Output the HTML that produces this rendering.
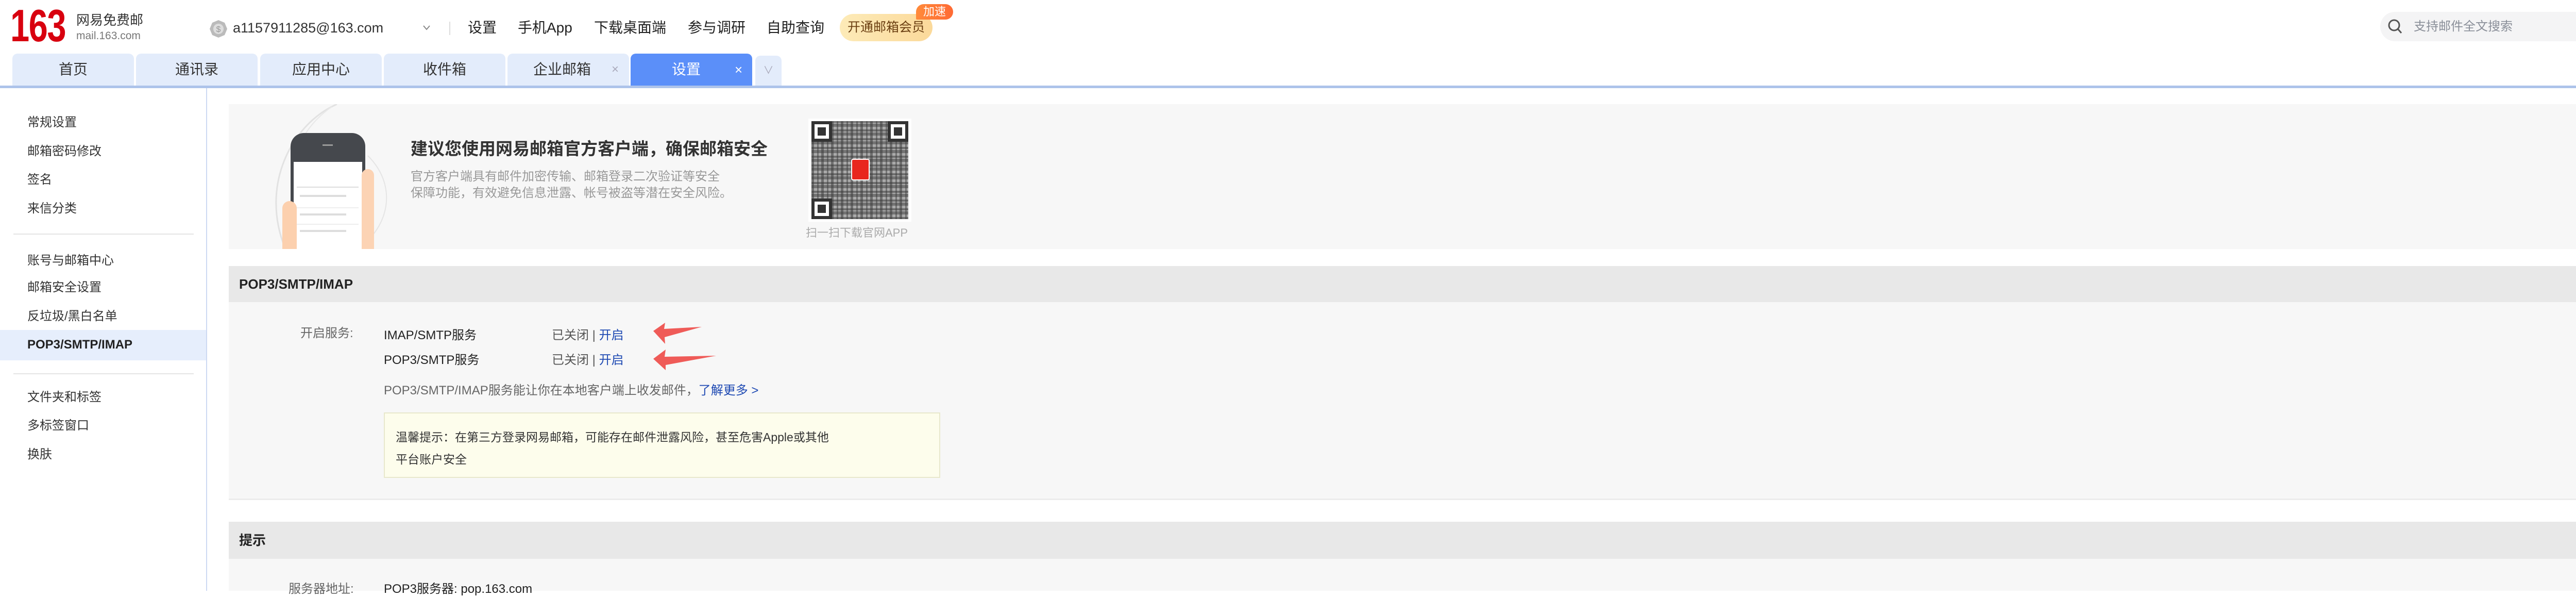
<!DOCTYPE html>
<html><head><meta charset="utf-8"><style>
*{margin:0;padding:0;box-sizing:border-box}
body{width:5120px;height:1146px;overflow:hidden;background:#fff;font-family:"Liberation Sans","Noto Sans CJK SC",sans-serif;color:#333;position:relative}
.a{position:absolute;white-space:nowrap}
.tab{position:absolute;top:104px;height:62px;width:236px;background:#e3ecfb;border-radius:10px 10px 0 0;font-size:28px;line-height:62px;color:#333;text-align:center}
.sb{position:absolute;left:53px;font-size:24px;line-height:30px;color:#333}
.hr{position:absolute;left:26px;width:350px;height:2px;background:#e4e4e4}
.nav{position:absolute;top:36px;font-size:28px;line-height:36px;color:#222}
.fp{position:absolute;width:40px;height:40px;border:6px solid #333;background:#fff}
.fp div{margin:6px;width:16px;height:16px;background:#333}
</style></head><body>
<!-- header -->
<div class="a" style="left:20px;top:6px;font-size:88px;font-weight:bold;color:#d8000f;transform:scaleX(0.76);transform-origin:left top;letter-spacing:-2px;line-height:88px">163</div>
<div class="a" style="left:148px;top:24px;font-size:26px;line-height:30px;color:#333">网易免费邮</div>
<div class="a" style="left:148px;top:58px;font-size:21px;line-height:24px;color:#777">mail.163.com</div>
<svg class="a" style="left:406px;top:38px" width="36" height="36" viewBox="0 0 36 36"><polygon points="18,1 30,6 35,18 30,30 18,35 6,30 1,18 6,6" fill="#bbb"/><circle cx="18" cy="18" r="10" fill="#ddd"/><text x="18" y="24" font-size="16" text-anchor="middle" fill="#999" font-family="Liberation Sans">$</text></svg>
<div class="a" style="left:452px;top:36px;font-size:27px;line-height:36px;color:#333">a1157911285@163.com</div>
<svg class="a" style="left:820px;top:48px" width="16" height="12"><polyline points="2,2 8,9 14,2" fill="none" stroke="#888" stroke-width="2"/></svg>
<div class="a" style="left:872px;top:42px;width:2px;height:26px;background:#ddd"></div>
<div class="nav" style="left:908px">设置</div>
<div class="nav" style="left:1005px">手机App</div>
<div class="nav" style="left:1153px">下载桌面端</div>
<div class="nav" style="left:1335px">参与调研</div>
<div class="nav" style="left:1488px">自助查询</div>
<div class="a" style="left:1630px;top:27px;width:180px;height:53px;border-radius:27px;background:linear-gradient(90deg,#fdebb8,#fbd99a);color:#6b3f12;font-size:25px;line-height:53px;text-align:center">开通邮箱会员</div>
<div class="a" style="left:1778px;top:8px;width:72px;height:30px;border-radius:15px 15px 15px 2px;background:linear-gradient(90deg,#ff8a3a,#ff6a34);color:#fff;font-size:22px;line-height:30px;text-align:center">加速</div>
<div class="a" style="left:4620px;top:23px;width:476px;height:57px;border-radius:29px;background:#f4f4f5"></div>
<svg class="a" style="left:4634px;top:36px" width="30" height="32"><circle cx="13" cy="13" r="10" fill="none" stroke="#555" stroke-width="3"/><line x1="20" y1="20" x2="27" y2="28" stroke="#555" stroke-width="3"/></svg>
<div class="a" style="left:4685px;top:36px;font-size:24px;line-height:32px;color:#8a8f99">支持邮件全文搜索</div>
<!-- tabs -->
<div class="tab" style="left:24px">首页</div>
<div class="tab" style="left:264px">通讯录</div>
<div class="tab" style="left:505px">应用中心</div>
<div class="tab" style="left:745px">收件箱</div>
<div class="tab" style="left:985px;text-align:left;padding-left:50px">企业邮箱<span style="position:absolute;left:202px;color:#aab;font-size:24px">×</span></div>
<div class="tab" style="left:1224px;background:#5b8ff9;color:#fff;text-align:left;padding-left:80px">设置<span style="position:absolute;left:202px;font-size:26px">×</span></div>
<div class="tab" style="left:1466px;width:51px;top:108px;height:58px;line-height:58px;color:#aab;font-size:20px">∨</div>
<div class="a" style="left:0;top:166px;width:5120px;height:5px;background:#adc3ea"></div>
<!-- sidebar -->
<div class="a" style="left:400px;top:171px;width:2px;height:975px;background:#cdd9f2"></div>
<div class="sb" style="top:223px">常规设置</div>
<div class="sb" style="top:279px">邮箱密码修改</div>
<div class="sb" style="top:334px">签名</div>
<div class="sb" style="top:390px">来信分类</div>
<div class="hr" style="top:453px"></div>
<div class="sb" style="top:491px">账号与邮箱中心</div>
<div class="sb" style="top:543px">邮箱安全设置</div>
<div class="sb" style="top:599px">反垃圾/黑白名单</div>
<div class="a" style="left:0;top:640px;width:400px;height:59px;background:#e6eefc"></div>
<div class="sb" style="top:654px;font-weight:bold;color:#222">POP3/SMTP/IMAP</div>
<div class="hr" style="top:724px"></div>
<div class="sb" style="top:756px">文件夹和标签</div>
<div class="sb" style="top:811px">多标签窗口</div>
<div class="sb" style="top:867px">换肤</div>
<!-- banner -->
<div class="a" style="left:444px;top:202px;width:4653px;height:281px;background:#f7f7f7;overflow:hidden">
 <svg class="a" style="left:0;top:0" width="400" height="281"><path d="M210 0 C120 40 60 160 110 281" fill="none" stroke="#e2e2e2" stroke-width="3"/><path d="M200 5 C80 90 120 230 230 281" fill="none" stroke="#e8e8e8" stroke-width="2"/><path d="M270 100 C330 160 310 240 250 281" fill="none" stroke="#e5e5e5" stroke-width="2"/></svg>
 <div class="a" style="left:120px;top:56px;width:145px;height:260px;border-radius:26px;background:#45484d"></div>
 <div class="a" style="left:182px;top:78px;width:20px;height:3px;background:#999"></div>
 <div class="a" style="left:126px;top:112px;width:133px;height:200px;background:#fff"></div>
 <div class="a" style="left:132px;top:160px;width:120px;height:2px;background:#ddd"></div>
 <div class="a" style="left:132px;top:200px;width:120px;height:2px;background:#eee"></div>
 <div class="a" style="left:132px;top:232px;width:120px;height:2px;background:#eee"></div>
 <div class="a" style="left:138px;top:176px;width:90px;height:4px;background:#ddd"></div>
 <div class="a" style="left:138px;top:212px;width:90px;height:4px;background:#ddd"></div>
 <div class="a" style="left:138px;top:244px;width:90px;height:4px;background:#ddd"></div>
 <div class="a" style="left:258px;top:126px;width:24px;height:160px;border-radius:12px 12px 0 0;background:#fcd3b4"></div>
 <div class="a" style="left:104px;top:188px;width:28px;height:110px;border-radius:14px;background:#fcd0ae"></div>
 <div class="a" style="left:353px;top:67px;font-size:33px;font-weight:bold;line-height:40px;color:#333">建议您使用网易邮箱官方客户端，确保邮箱安全</div>
 <div class="a" style="left:353px;top:125px;font-size:24px;line-height:32px;color:#999">官方客户端具有邮件加密传输、邮箱登录二次验证等安全<br>保障功能，有效避免信息泄露、帐号被盗等潜在安全风险。</div>
 <div class="a" style="left:1125px;top:28px;width:200px;height:200px;background:#fff"></div>
 <div class="a" style="left:1131px;top:33px;width:188px;height:190px;background:
 repeating-linear-gradient(90deg,rgba(60,60,60,.55) 0 5px,transparent 5px 11px,rgba(60,60,60,.5) 11px 14px,transparent 14px 19px),
 repeating-linear-gradient(0deg,rgba(60,60,60,.55) 0 4px,transparent 4px 9px,rgba(60,60,60,.5) 9px 15px,transparent 15px 17px),#aaa"></div>
 <div class="fp" style="left:1131px;top:33px"><div></div></div>
 <div class="fp" style="left:1279px;top:33px"><div></div></div>
 <div class="fp" style="left:1131px;top:183px"><div></div></div>
 <div class="a" style="left:1208px;top:106px;width:36px;height:42px;border-radius:4px;background:#e8261e;border:2px solid #fff"></div>
 <div class="a" style="left:1120px;top:236px;font-size:22px;line-height:28px;color:#aaa">扫一扫下载官网APP</div>
</div>
<!-- POP3 section -->
<div class="a" style="left:444px;top:516px;width:4653px;height:70px;background:#e8e8e8"></div>
<div class="a" style="left:464px;top:536px;font-size:26px;font-weight:bold;line-height:30px;color:#222">POP3/SMTP/IMAP</div>
<div class="a" style="left:444px;top:586px;width:4653px;height:384px;background:#f7f7f7;border-bottom:3px solid #ececec"></div>
<div class="a" style="left:583px;top:632px;font-size:24px;line-height:30px;color:#666">开启服务:</div>
<div class="a" style="left:745px;top:636px;font-size:24px;line-height:30px;color:#222">IMAP/SMTP服务</div>
<div class="a" style="left:1071px;top:636px;font-size:24px;line-height:30px;color:#555">已关闭 | <span style="color:#1f4ab3">开启</span></div>
<div class="a" style="left:745px;top:684px;font-size:24px;line-height:30px;color:#222">POP3/SMTP服务</div>
<div class="a" style="left:1071px;top:684px;font-size:24px;line-height:30px;color:#555">已关闭 | <span style="color:#1f4ab3">开启</span></div>
<svg class="a" style="left:1262px;top:622px" width="140" height="100"><polygon points="6,20 29,4 27,16 100,12 28,32 29,45" fill="#ef5b58"/><polygon points="6,74 30,56 28,70 128,68 30,86 30,96" fill="#ef5b58"/></svg>
<div class="a" style="left:745px;top:743px;font-size:24px;line-height:30px;color:#666">POP3/SMTP/IMAP服务能让你在本地客户端上收发邮件，<span style="color:#1f4ab3">了解更多 &gt;</span></div>
<div class="a" style="left:745px;top:800px;width:1080px;height:127px;background:#fdfdec;border:2px solid #e8e8cc"></div>
<div class="a" style="left:768px;top:827px;font-size:23px;line-height:43px;color:#333">温馨提示：在第三方登录网易邮箱，可能存在邮件泄露风险，甚至危害Apple或其他<br>平台账户安全</div>
<!-- tips section -->
<div class="a" style="left:444px;top:1012px;width:4653px;height:72px;background:#e8e8e8"></div>
<div class="a" style="left:464px;top:1033px;font-size:26px;font-weight:bold;line-height:30px;color:#222">提示</div>
<div class="a" style="left:444px;top:1084px;width:4653px;height:62px;background:#f7f7f7"></div>
<div class="a" style="left:560px;top:1128px;font-size:24px;line-height:30px;color:#666">服务器地址:</div>
<div class="a" style="left:745px;top:1128px;font-size:24px;line-height:30px;color:#222">POP3服务器: pop.163.com</div>
</body></html>
